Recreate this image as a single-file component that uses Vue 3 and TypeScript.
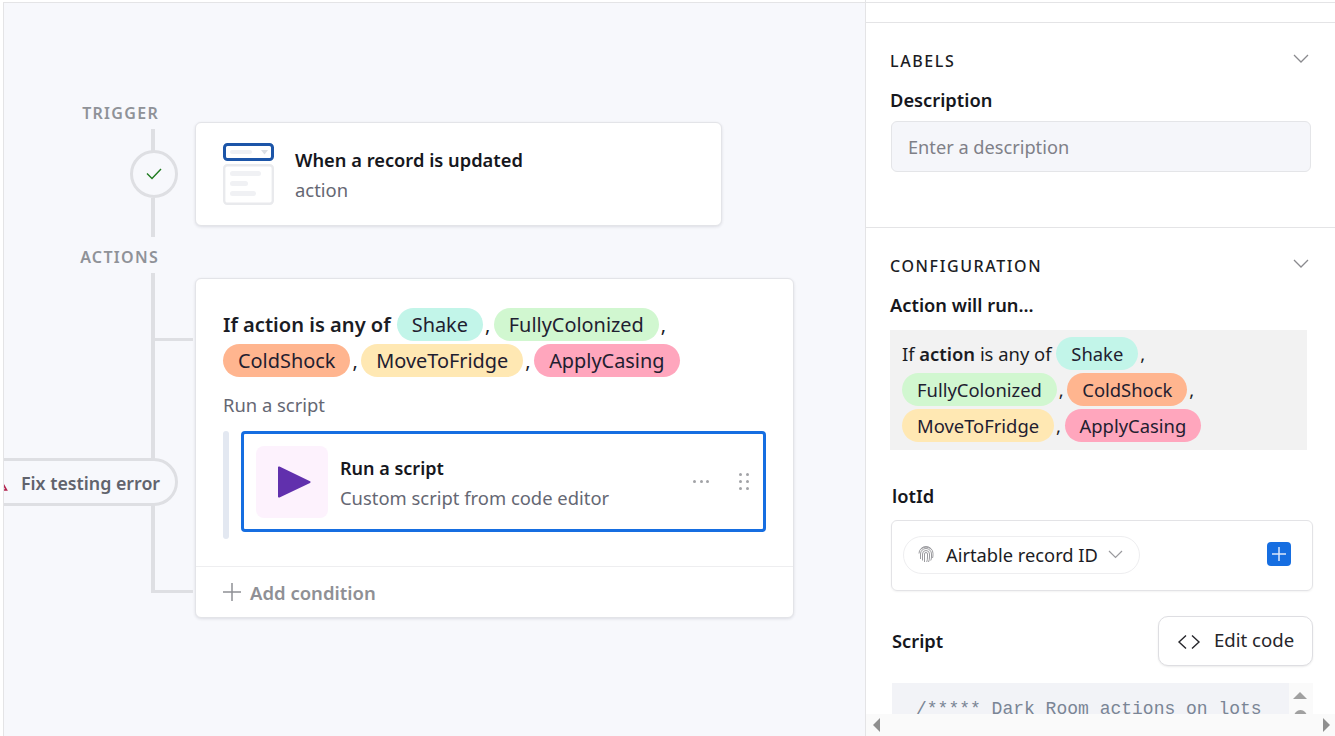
<script setup lang="ts">
interface Tag {
  label: string;
  color: string;
}

const triggerTag: Tag[] = [
  { label: 'Shake', color: '#c2f5e9' },
  { label: 'FullyColonized', color: '#d1f7d0' },
  { label: 'ColdShock', color: '#ffb58f' },
  { label: 'MoveToFridge', color: '#ffe8b3' },
  { label: 'ApplyCasing', color: '#ffa6bd' },
];
</script>

<template>
  <div class="page">
    <main class="canvas">
      <span class="rail-label trigger-label">TRIGGER</span>
      <span class="rail trigger-top"></span>
      <span class="status">
        <svg width="16" height="12" viewBox="0 0 16 12" fill="none">
          <path d="M1 5.500l5 5L15 1" stroke="#1f7a1f" stroke-width="1.400" />
        </svg>
      </span>
      <span class="rail trigger-bottom"></span>
      <span class="rail-label actions-label">ACTIONS</span>
      <span class="rail actions-line"></span>
      <span class="branch branch-top"></span>
      <span class="branch branch-bottom"></span>
      <div class="error-pill">
        <svg width="20" height="20" viewBox="0 0 20 20" fill="none">
          <path d="M10 2l8.500 15h-17z" stroke="#b3234e" stroke-width="1.600" />
        </svg>
        Fix testing error
      </div>

      <section class="card trigger-card">
        <svg class="trigger-icon" width="52" height="62" viewBox="0 0 52 62" fill="none">
          <rect x="1.500" y="1.500" width="48" height="15" rx="3" fill="#fff" stroke="#1c55a8" stroke-width="3" />
          <rect x="7" y="7" width="22" height="4" rx="2" fill="#eef0f4" />
          <path d="M38 7h7l-3.500 4.500z" fill="#dcdfe4" />
          <rect x="1.200" y="22.200" width="48.600" height="38.600" rx="3" fill="#fff" stroke="#e9eaed" stroke-width="2.400" />
          <rect x="7" y="28" width="31" height="5" rx="2.500" fill="#f0f1f4" />
          <rect x="7" y="38" width="18" height="5" rx="2.500" fill="#f0f1f4" />
          <rect x="7" y="48" width="26" height="5" rx="2.500" fill="#f0f1f4" />
        </svg>
        <div class="trigger-text">
          <div class="title">When a record is updated</div>
          <div class="subtitle">action</div>
        </div>
      </section>

      <section class="card action-card">
        <div class="action-body">
          <div class="condition">
            <strong>If action is any of</strong>
            <template v-for="(tag, i) in triggerTag" :key="tag.label">
              <span class="tag" :style="{ background: tag.color }">{{ tag.label }}</span><span v-if="i < triggerTag.length - 1" class="comma">,</span>
            </template>
          </div>
          <div class="run-label">Run a script</div>
          <div class="step-row">
            <span class="step-bar"></span>
            <div class="step">
              <span class="step-icon">
                <svg width="36" height="36" viewBox="0 0 36 36">
                  <path d="M2 3.500v29a1 1 0 0 0 1.500.9L34 19a1 1 0 0 0 0-1.800L3.500 2.600A1 1 0 0 0 2 3.500z" fill="#6130ad" />
                </svg>
              </span>
              <div class="step-text">
                <div class="title step-title">Run a script</div>
                <div class="subtitle">Custom script from code editor</div>
              </div>
              <span class="dots">
                <i></i><i></i><i></i>
              </span>
              <span class="grip">
                <i></i><i></i><i></i><i></i><i></i><i></i>
              </span>
            </div>
          </div>
        </div>
        <div class="add-row">
          <svg width="18" height="18" viewBox="0 0 18 18" fill="none">
            <path d="M9 0v18M0 9h18" stroke="#8f9095" stroke-width="1.500" />
          </svg>
          <span>Add condition</span>
        </div>
      </section>
    </main>

    <aside class="panel">
      <div class="top-strip"></div>
      <section class="block labels">
        <header class="block-head">
          <h2>LABELS</h2>
          <svg width="16" height="10" viewBox="0 0 16 10" fill="none">
            <path d="M1 1l7 7 7-7" stroke="#8a8a8e" stroke-width="1.300" />
          </svg>
        </header>
        <div class="field-label">Description</div>
        <div class="input">Enter a description</div>
      </section>

      <section class="block config">
        <header class="block-head">
          <h2>CONFIGURATION</h2>
          <svg width="16" height="10" viewBox="0 0 16 10" fill="none">
            <path d="M1 1l7 7 7-7" stroke="#8a8a8e" stroke-width="1.300" />
          </svg>
        </header>
        <div class="field-label">Action will run...</div>
        <div class="summary">
          If <strong>action</strong> is any of
          <template v-for="(tag, i) in triggerTag" :key="tag.label">
            <span class="tag" :style="{ background: tag.color }">{{ tag.label }}</span><span v-if="i < triggerTag.length - 1" class="comma">,</span>
          </template>
        </div>

        <div class="field-label lot-label">lotId</div>
        <div class="lot-box">
          <div class="record-pill">
            <svg width="16" height="17" viewBox="0 0 16 17" fill="none" stroke="#9c9ca0" stroke-width="1">
              <path d="M3 3a7.500 7.500 0 0 1 10 0" />
              <path d="M1 7.500a7 7 0 0 1 14 0c0 2 0 3-.5 4.500" />
              <path d="M2.500 13V8a5.500 5.500 0 0 1 11 0v3c0 1.500-.3 2.500-.8 3.500" />
              <path d="M4.500 14.500V8a3.500 3.500 0 0 1 7 0v3c0 2-.3 3.500-1 5" />
              <path d="M6.500 16V8a1.500 1.500 0 0 1 3 0v3c0 2-.2 3.500-.8 5" />
            </svg>
            <span>Airtable record ID</span>
            <svg class="pill-chevron" width="15" height="9" viewBox="0 0 15 9" fill="none">
              <path d="M1 1l6.500 6.500L14 1" stroke="#9a9a9e" stroke-width="1.200" />
            </svg>
          </div>
          <span class="add-btn">
            <svg width="14" height="14" viewBox="0 0 14 14" fill="none">
              <path d="M7 0v14M0 7h14" stroke="#dbe8fb" stroke-width="1.500" />
            </svg>
          </span>
        </div>

        <div class="script-head">
          <div class="field-label script-label">Script</div>
          <button class="edit-btn" type="button">
            <svg width="24" height="16" viewBox="0 0 24 16" fill="none">
              <path d="M9 1.500L2 8l7 6.500M15 1.500L22 8l-7 6.500" stroke="#26262b" stroke-width="1.400" />
            </svg>
            <span class="edit-label">Edit code</span>
          </button>
        </div>

        <div class="code-wrap">
          <pre class="code">/***** Dark Room actions on lots</pre>
          <div class="v-scroll">
            <span class="arrow-up"></span>
            <span class="thumb"></span>
          </div>
        </div>
      </section>

      <div class="h-scroll">
        <span class="arrow-left"></span>
        <span class="arrow-right"></span>
      </div>
    </aside>
  </div>
</template>

<style>
html,
body {
  margin: 0;
  overflow: hidden;
}
</style>

<style scoped>
.page {
  display: flex;
  width: 1335px;
  height: 736px;
  overflow: hidden;
  background: #fff;
  color: #1b1c24;
  font-family: "Noto Sans", "Open Sans", sans-serif;
  font-size: 19.900px;
}

/* canvas: nodes and connectors of the automation diagram */
.canvas {
  position: relative;
  box-sizing: border-box;
  flex: 0 0 862px;
  height: 734px;
  margin: 2px 0 0 3px;
  padding: 119px 0 0 191px;
  overflow: hidden;
  background: #f7f8fc;
  border-top: 1px solid #e4e4e6;
  border-left: 1px solid #e4e4e6;
}

.rail-label {
  position: absolute;
  right: 706px;
  font-size: 16px;
  line-height: 20px;
  font-weight: 600;
  letter-spacing: 1.300px;
  color: #8f9298;
}

.trigger-label {
  top: 100px;
}

.actions-label {
  top: 244px;
}

.rail {
  position: absolute;
  left: 147px;
  width: 4px;
  background: #dedfe3;
}

.trigger-top {
  top: 126px;
  height: 22px;
}

.trigger-bottom {
  top: 195px;
  height: 39px;
}

.actions-line {
  top: 270px;
  height: 320px;
}

.status {
  position: absolute;
  top: 147px;
  left: 126px;
  box-sizing: border-box;
  display: flex;
  align-items: center;
  justify-content: center;
  width: 48px;
  height: 48px;
  border: 3px solid #dedfe3;
  border-radius: 50%;
}

.branch {
  position: absolute;
  left: 147px;
  width: 42px;
  height: 3px;
  background: #dedfe3;
}

.branch-top {
  top: 335px;
}

.branch-bottom {
  top: 587px;
}

.error-pill {
  position: absolute;
  top: 455px;
  left: -30px;
  box-sizing: border-box;
  display: flex;
  align-items: center;
  gap: 13px;
  width: 204px;
  height: 48px;
  padding: 1px 0 0 11px;
  background: #f7f8fc;
  border: 3px solid #dedfe3;
  border-radius: 24px;
  font-size: 17.800px;
  font-weight: 600;
  color: #61636d;
}

.card {
  box-sizing: border-box;
  background: #fff;
  border: 1px solid #e3e4e8;
  border-radius: 6px;
  box-shadow: 0 1px 3px rgba(30, 35, 60, 0.12);
}

.trigger-card {
  display: flex;
  align-items: center;
  gap: 20px;
  width: 527px;
  height: 104px;
  padding-left: 27px;
}

.trigger-text {
  padding-top: 2px;
}

.title {
  font-size: 18.300px;
  line-height: 30px;
  font-weight: 600;
  color: #16171d;
}

.subtitle {
  font-size: 18.400px;
  line-height: 30px;
  color: #656773;
}

.action-card {
  width: 599px;
  height: 340px;
  margin-top: 52px;
}

.action-body {
  height: 288px;
  padding: 28px 27px 0;
  box-sizing: border-box;
  border-bottom: 1px solid #eeeef0;
}

.condition {
  width: 470px;
  line-height: 36px;
}

.condition strong {
  margin-right: 6px;
  font-size: 20.100px;
  font-weight: 600;
}

.summary strong {
  font-weight: 600;
}

.tag {
  display: inline-block;
  height: 33px;
  padding: 0 15px;
  line-height: 33px;
  border-radius: 17px;
  color: #1f2030;
}

.comma {
  margin: 0 3.500px 0 2px;
}

.run-label {
  margin-top: 13px;
  font-size: 18.400px;
  line-height: 26px;
  color: #656773;
}

.step-row {
  display: flex;
  gap: 12px;
  margin-top: 13px;
}

.step-bar {
  width: 6px;
  height: 108px;
  background: #e3e8f1;
  border-radius: 3px;
}

.step {
  box-sizing: border-box;
  display: flex;
  align-items: center;
  width: 525px;
  height: 101px;
  padding: 0 12px;
  border: 3px solid #166ee1;
  border-radius: 4px;
}

.step-icon {
  display: flex;
  align-items: center;
  justify-content: center;
  width: 72px;
  height: 72px;
  flex: none;
  padding-left: 4px;
  box-sizing: border-box;
  background: #fdf2fd;
  border-radius: 8px;
}

.step-text {
  flex: 1;
  margin-left: 12px;
  padding-top: 2px;
}

.step-title {
  font-size: 18px;
}

.dots {
  display: flex;
  gap: 3.500px;
  margin-right: 30px;
}

.dots i,
.grip i {
  width: 3px;
  height: 3px;
  background: #a2a3a7;
  border-radius: 50%;
}

.grip {
  display: grid;
  grid-template-columns: 3px 3px;
  gap: 4px;
  margin-right: 2px;
}

.add-row {
  display: flex;
  align-items: center;
  gap: 9px;
  height: 51px;
  padding: 0 0 1px 27px;
  box-sizing: border-box;
  font-size: 18.500px;
  font-weight: 600;
  color: #8f9095;
}

/* right panel */
.panel {
  position: relative;
  flex: 1;
  height: 736px;
  overflow: hidden;
  border-left: 1px solid #e4e4e6;
}

.top-strip {
  height: 19px;
  margin-top: 2px;
  border-top: 1px solid #e4e4e6;
  border-bottom: 1px solid #e4e4e6;
}

.block {
  box-sizing: border-box;
  padding: 0 22px 0 24px;
}

.labels {
  height: 205px;
  padding-top: 28px;
  border-bottom: 1px solid #e4e4e6;
}

.config {
  padding-top: 28px;
}

.block-head {
  display: flex;
  align-items: center;
  justify-content: space-between;
  height: 20px;
  padding-right: 4px;
}

.block-head h2 {
  margin: 0;
  font-size: 16px;
  line-height: 20px;
  font-weight: 500;
  letter-spacing: 1.600px;
  color: #1b1c24;
}

.block-head svg {
  margin-top: -4px;
}

.field-label {
  margin-top: 15px;
  font-size: 18.300px;
  line-height: 28px;
  font-weight: 600;
  color: #16171d;
}

.input {
  box-sizing: border-box;
  height: 51px;
  margin: 7px 2px 0 1px;
  padding-left: 16px;
  line-height: 50px;
  font-size: 18.200px;
  color: #7f8088;
  background: #f5f6fa;
  border: 1px solid #e4e5e8;
  border-radius: 6px;
}

.summary {
  box-sizing: border-box;
  width: 417px;
  height: 120px;
  margin-top: 11px;
  padding: 6px 12px;
  line-height: 36px;
  font-size: 18.400px;
  background: #f2f2f2;
}

.lot-label {
  margin: 32px 0 0 2px;
}

.lot-box {
  box-sizing: border-box;
  display: flex;
  align-items: center;
  justify-content: space-between;
  height: 71px;
  margin: 10px 0 0 1px;
  padding: 0 21px 4px 11px;
  border: 1px solid #e3e3e6;
  border-radius: 6px;
  box-shadow: 0 1px 2px rgba(0, 0, 0, 0.05);
}

.record-pill {
  box-sizing: border-box;
  display: flex;
  align-items: center;
  gap: 12px;
  height: 38px;
  margin-top: 2px;
  padding: 0 16px 0 14px;
  font-size: 18.300px;
  border: 1px solid #eeeef0;
  border-radius: 19px;
}

.pill-chevron {
  margin-left: -2px;
}

.add-btn {
  display: flex;
  align-items: center;
  justify-content: center;
  width: 24px;
  height: 24px;
  background: #166ee1;
  border-radius: 4px;
}

.script-head {
  display: flex;
  align-items: center;
  justify-content: space-between;
  margin: 25px 0 0 2px;
}

.script-label {
  margin: 0;
}

.edit-btn {
  display: flex;
  align-items: center;
  gap: 13px;
  box-sizing: border-box;
  width: 155px;
  height: 50px;
  padding: 0 0 0 18px;
  font: inherit;
  font-size: 18.600px;
  color: #26262b;
  background: #fff;
  border: 1px solid #dedee2;
  border-radius: 10px;
  box-shadow: 0 1px 2px rgba(0, 0, 0, 0.08);
}

.edit-btn svg {
  margin-top: 2px;
}

.edit-label {
  margin-bottom: 4px;
}

.code-wrap {
  display: flex;
  height: 60px;
  margin: 17px 0 0 2px;
}

.code {
  flex: 1;
  margin: 0;
  padding: 15px 0 0 24px;
  font-family: "Liberation Mono", monospace;
  font-size: 18px;
  line-height: 22px;
  color: #7a8595;
  background: #f2f3f7;
}

.v-scroll {
  position: relative;
  width: 24px;
  background: #fafafa;
}

.arrow-up {
  position: absolute;
  top: 9px;
  left: 4px;
  border: 7.500px solid transparent;
  border-top: 0;
  border-bottom-color: #a0a0a0;
}

.thumb {
  position: absolute;
  top: 27px;
  left: 5px;
  width: 13px;
  height: 20px;
  background: #a0a0a0;
  border-radius: 7px;
}

.h-scroll {
  position: absolute;
  left: 0;
  right: 0;
  bottom: 0;
  height: 22px;
  background: #fafafa;
}

.arrow-left,
.arrow-right {
  position: absolute;
  top: 4px;
  border: 7.500px solid transparent;
}

.arrow-left {
  left: 7px;
  border-left: 0;
  border-right-color: #8f8f8f;
}

.arrow-right {
  right: 5px;
  border-right: 0;
  border-left-color: #8f8f8f;
}
</style>
